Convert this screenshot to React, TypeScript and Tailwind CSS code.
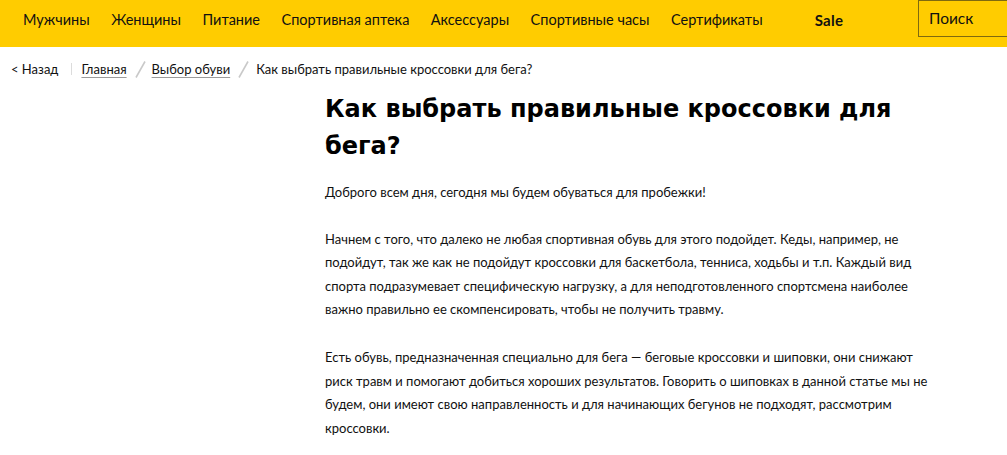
import React from "react";

const navItems = [
  "Мужчины",
  "Женщины",
  "Питание",
  "Спортивная аптека",
  "Аксессуары",
  "Спортивные часы",
  "Сертификаты",
];

function Slash() {
  return (
    <svg width="11" height="17" viewBox="0 0 11 17" className="shrink-0">
      <line x1="10" y1="0.5" x2="1" y2="16.5" stroke="#c9c9c9" strokeWidth="1.6" />
    </svg>
  );
}

export default function App() {
  return (
    <div className="w-[1007px] h-[455px] overflow-hidden bg-white text-[#111] font-['Lato',sans-serif]">
      <header className="h-[47px] bg-[#ffcc00] flex items-start overflow-hidden">
        <nav className="flex items-start pl-[23px] pt-[10px] gap-[21.5px] text-[14.5px] leading-[20px] whitespace-nowrap">
          {navItems.map((n) => (
            <span key={n}>{n}</span>
          ))}
        </nav>
        <span className="ml-[52px] pt-[10px] text-[15px] leading-[20px] font-bold tracking-[0.3px]">Sale</span>
        <div className="ml-auto w-[89px] h-[37px] border border-r-0 border-[#7f6a0f] flex items-start pl-[10px] pt-[7px] text-[15.5px] leading-[20px]">
          Поиск
        </div>
      </header>

      <div className="flex items-center pl-[11px] mt-[12px] h-[20px] text-[13px] leading-[20px] whitespace-nowrap">
        <span>&lt; Назад</span>
        <span className="ml-[13px] w-px h-[12px] bg-[#dcdcdc]" />
        <span className="ml-[9px] underline decoration-[#9b9b9b] underline-offset-[3px]">Главная</span>
        <span className="ml-[8px] mr-[6px]">
          <Slash />
        </span>
        <span className="underline decoration-[#9b9b9b] underline-offset-[3px]">Выбор обуви</span>
        <span className="ml-[8px] mr-[7px]">
          <Slash />
        </span>
        <span>Как выбрать правильные кроссовки для бега?</span>
      </div>

      <main className="pl-[325px] pt-[12px]">
        <h1 className="font-['DejaVu_Sans',sans-serif] font-bold text-[24px] leading-[37px] text-black whitespace-nowrap">
          Как выбрать правильные кроссовки для
          <br />
          бега?
        </h1>
        <div className="mt-[16px] text-[13px] leading-[23.6px] whitespace-nowrap">
          <p>Доброго всем дня, сегодня мы будем обуваться для пробежки!</p>
          <p className="mt-[23px]">
            Начнем с того, что далеко не любая спортивная обувь для этого подойдет. Кеды, например, не
            <br />
            подойдут, так же как не подойдут кроссовки для баскетбола, тенниса, ходьбы и т.п. Каждый вид
            <br />
            спорта подразумевает специфическую нагрузку, а для неподготовленного спортсмена наиболее
            <br />
            важно правильно ее скомпенсировать, чтобы не получить травму.
          </p>
          <p className="mt-[24px]">
            Есть обувь, предназначенная специально для бега — беговые кроссовки и шиповки, они снижают
            <br />
            риск травм и помогают добиться хороших результатов. Говорить о шиповках в данной статье мы не
            <br />
            будем, они имеют свою направленность и для начинающих бегунов не подходят, рассмотрим
            <br />
            кроссовки.
          </p>
        </div>
      </main>
    </div>
  );
}
